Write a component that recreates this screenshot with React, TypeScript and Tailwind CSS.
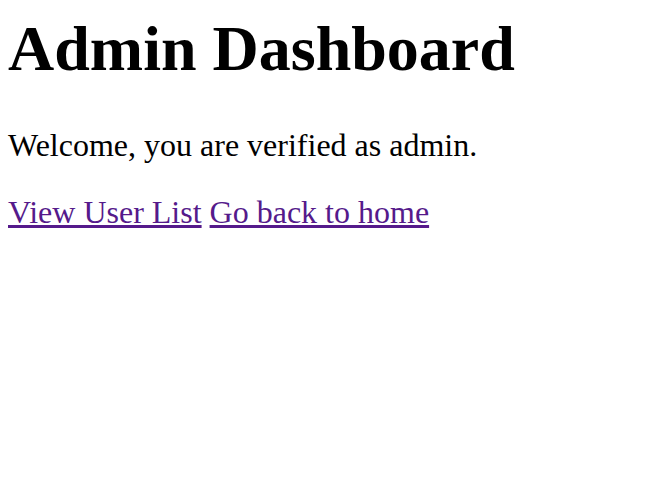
export default function App() {
  return (
    <div className="min-h-screen bg-white px-2 text-black" style={{ fontFamily: '"Liberation Serif", "Times New Roman", serif' }}>
      <h1 className="pt-[12px] text-[64px] font-bold leading-[74px]">Admin Dashboard</h1>
      <p className="mt-[41px] text-[32px] leading-[37px]">Welcome, you are verified as admin.</p>
      <p className="mt-[30px] text-[32px] leading-[37px]">
        <a href="#" className="text-[#551a8b] underline">
          View User List
        </a>{" "}
        <a href="#" className="text-[#551a8b] underline">
          Go back to home
        </a>
      </p>
    </div>
  );
}
